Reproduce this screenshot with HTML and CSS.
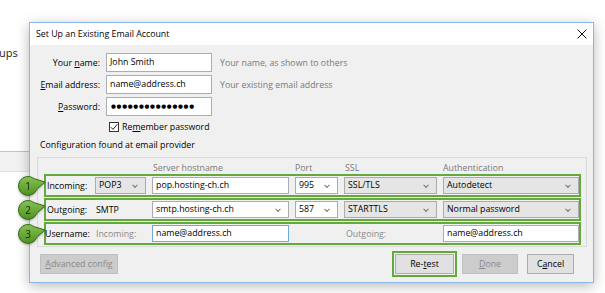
FILE: index.html
```html
<!DOCTYPE html>
<html lang="en">
<head>
  <meta charset="UTF-8">
  <meta name="viewport" content="width=device-width, initial-scale=1.0">
  <title>Set Up an Existing Email Account</title>
  <link rel="stylesheet" href="styles.css">
</head>
<body>
  <!-- window behind the dialog -->
  <div class="backdrop">
    <div class="backdrop-text">ups</div>
    <div class="backdrop-strip"></div>
  </div>

  <div class="dialog">
    <div class="titlebar">
      <span class="title">Set Up an Existing Email Account</span>
      <svg class="close" width="10" height="10" viewBox="0 0 10 10">
        <path d="M0.5 0.5 L9.5 9.5 M9.5 0.5 L0.5 9.5" stroke="#111" stroke-width="1" fill="none"/>
      </svg>
    </div>

    <div class="dialog-body">
      <!-- Account details -->
      <div class="account">
        <label>Your <u>n</u>ame:</label>
        <div class="field">John Smith</div>
        <span class="hint">Your name, as shown to others</span>

        <label><u>E</u>mail address:</label>
        <div class="field">name@address.ch</div>
        <span class="hint">Your existing email address</span>

        <label><u>P</u>assword:</label>
        <div class="field password">&#9679;&#9679;&#9679;&#9679;&#9679;&#9679;&#9679;&#9679;&#9679;&#9679;&#9679;&#9679;&#9679;&#9679;&#9679;</div>
        <span></span>
      </div>

      <div class="remember">
        <span class="checkbox">
          <svg width="8" height="8" viewBox="0 0 8 8">
            <path d="M0.8 4.2 L3 6.4 L7.3 1.2" stroke="#222" stroke-width="1" fill="none"/>
          </svg>
        </span>
        <span>Re<u>m</u>ember password</span>
      </div>

      <div class="found">Configuration found at email provider</div>

      <!-- Server settings -->
      <div class="config-panel">
        <div class="config-head">
          <span></span>
          <span></span>
          <span>Server hostname</span>
          <span>Port</span>
          <span>SSL</span>
          <span>Authentication</span>
        </div>

        <div class="config-row">
          <svg class="badge" width="28" height="26" viewBox="0 0 28 26">
            <defs>
              <linearGradient id="g1" x1="0" y1="0" x2="0" y2="1">
                <stop offset="0" stop-color="#86c451"/>
                <stop offset="1" stop-color="#4f8f23"/>
              </linearGradient>
            </defs>
            <path d="M16.1 5.7 L27 9 L18.9 16.2 A9.5 9.5 0 1 1 16.1 5.7 Z" fill="url(#g1)" stroke="#376a18" stroke-width="1"/>
            <text x="10" y="16.6" text-anchor="middle">1</text>
          </svg>
          <span class="row-label">Incoming:</span>
          <div class="select grey">POP3</div>
          <div class="field">pop.hosting-ch.ch</div>
          <div class="select">995</div>
          <div class="select grey">SSL/TLS</div>
          <div class="select grey">Autodetect</div>
        </div>

        <div class="config-row">
          <svg class="badge" width="28" height="26" viewBox="0 0 28 26">
            <path d="M16.1 5.7 L27 9 L18.9 16.2 A9.5 9.5 0 1 1 16.1 5.7 Z" fill="url(#g1)" stroke="#376a18" stroke-width="1"/>
            <text x="10" y="16.6" text-anchor="middle">2</text>
          </svg>
          <span class="row-label">Outgoing:</span>
          <span class="plain">SMTP</span>
          <div class="select">smtp.hosting-ch.ch</div>
          <div class="select">587</div>
          <div class="select grey">STARTTLS</div>
          <div class="select grey">Normal password</div>
        </div>

        <div class="config-row">
          <svg class="badge" width="28" height="26" viewBox="0 0 28 26">
            <path d="M16.1 5.7 L27 9 L18.9 16.2 A9.5 9.5 0 1 1 16.1 5.7 Z" fill="url(#g1)" stroke="#376a18" stroke-width="1"/>
            <text x="10" y="16.6" text-anchor="middle">3</text>
          </svg>
          <span class="row-label user">Username:</span>
          <span class="muted">Incoming:</span>
          <div class="field focused">name@address.ch</div>
          <span></span>
          <span class="muted">Outgoing:</span>
          <div class="field">name@address.ch</div>
        </div>
      </div>

      <!-- Buttons -->
      <div class="actions">
        <button class="btn disabled advanced"><u>A</u>dvanced config</button>
        <span class="spacer"></span>
        <span class="highlight"><button class="btn retest">Re-<u>t</u>est</button></span>
        <button class="btn disabled done"><u>D</u>one</button>
        <button class="btn cancel">C<u>a</u>ncel</button>
      </div>
    </div>
  </div>
</body>
</html>
```

FILE: styles.css
```css
body {
  margin: 0;
  width: 605px;
  height: 293px;
  overflow: hidden;
  position: relative;
  background: #fff;
  font-family: "Open Sans", "Liberation Sans", sans-serif;
  font-size: 8.8px;
  color: #111;
}

u {
  text-decoration-thickness: 1px;
  text-underline-offset: 1px;
}

/* Background window */
.backdrop-text {
  padding-top: 45px;
  margin-left: -1px;
  font-size: 11px;
  line-height: 16px;
  color: #222;
}

.backdrop-strip {
  margin-top: 90px;
  width: 40px;
  height: 19px;
  background: #f2f2f2;
  border-top: 1px solid #c4c4c4;
  border-bottom: 1px solid #e0e0e0;
}

/* Dialog window */
.dialog {
  position: absolute;
  left: 29px;
  top: 22px;
  width: 565px;
  height: 261px;
  box-sizing: border-box;
  border: 1px solid #89b7e5;
  background: #f0f0f0;
  box-shadow: 0 3px 12px rgba(0, 0, 0, 0.28);
}

.titlebar {
  height: 22px;
  background: #fff;
  display: flex;
  align-items: center;
  justify-content: space-between;
  padding: 0 6px 0 6px;
}

.title {
  font-size: 8.8px;
  color: #000;
}

.dialog-body {
  padding: 8px 0 0 7px;
}

.account {
  display: grid;
  grid-template-columns: 63px 106px auto;
  column-gap: 6px;
  row-gap: 3px;
  align-items: center;
}

.account label {
  text-align: right;
  color: #000;
}

.field {
  height: 19px;
  box-sizing: border-box;
  border: 1px solid #abadb3;
  background: #fff;
  padding: 0 3px;
  line-height: 17px;
  color: #000;
  white-space: nowrap;
  overflow: hidden;
}

.password {
  font-family: "DejaVu Sans", sans-serif;
  font-size: 5.6px;
  letter-spacing: 0.7px;
  padding-left: 4px;
}

.hint {
  margin-left: 2px;
  color: #7a7a7a;
}

.remember {
  margin-top: 5px;
  padding-left: 72px;
  height: 12px;
  display: flex;
  align-items: center;
  gap: 3px;
  color: #000;
}

.checkbox {
  width: 10px;
  height: 10px;
  box-sizing: border-box;
  border: 1px solid #333;
  background: #fff;
  display: flex;
  align-items: center;
  justify-content: center;
}

.found {
  margin-top: 6px;
  padding-left: 3px;
  line-height: 12px;
  color: #000;
}

/* Server settings panel */
.config-panel {
  margin-top: 6px;
  width: 550px;
  box-sizing: border-box;
  border: 1px solid #dadada;
  padding: 4px 5px 1px 6px;
}

.config-head,
.config-row {
  display: grid;
  grid-template-columns: 43px 51px 137px 43px 93px 136px;
  column-gap: 6px;
  align-items: center;
}

.config-head {
  padding: 0 2px;
  height: 12px;
  line-height: 12px;
  color: #7a7a7a;
}

.config-head span:nth-child(3),
.config-head span:nth-child(5) {
  padding-left: 1px;
}

.config-row {
  position: relative;
  border: 2px solid #63a93c;
  padding: 1px 0;
  margin-top: 1px;
}

.config-head + .config-row {
  margin-top: 0;
}

.config-row .field,
.config-row .select {
  height: 17px;
  line-height: 15px;
}

.badge {
  position: absolute;
  left: -28px;
  top: -3px;
  filter: drop-shadow(0 1px 1px rgba(0, 0, 0, 0.25));
}

.badge text {
  font-family: "Open Sans", sans-serif;
  font-size: 10px;
  fill: #14240a;
}

.row-label {
  padding-left: 1px;
  color: #000;
  white-space: nowrap;
}

.row-label.user {
  margin-left: -1px;
  padding-left: 0;
}

.plain {
  padding-left: 1px;
  color: #000;
}

.muted {
  padding-left: 1px;
  color: #8a8a8a;
}

.config-row span:nth-child(6).muted {
  padding-left: 2px;
}

.field.focused {
  border-color: #6fa9de;
}

.select {
  position: relative;
  box-sizing: border-box;
  border: 1px solid #acacac;
  background: #fff;
  padding: 0 3px;
  color: #000;
  white-space: nowrap;
}

.select.grey {
  background: #e5e5e5;
}

.select::after {
  content: "";
  position: absolute;
  right: 8px;
  top: 50%;
  width: 3px;
  height: 3px;
  border-right: 1px solid #777;
  border-bottom: 1px solid #777;
  transform: translateY(-70%) rotate(45deg);
}

/* Buttons */
.actions {
  margin-top: 5px;
  height: 24px;
  display: flex;
  align-items: center;
  padding-right: 11px;
  width: 548px;
  box-sizing: border-box;
}

.spacer {
  flex: 1;
}

.btn {
  height: 20px;
  box-sizing: border-box;
  border: 1px solid #adadad;
  background: #e1e1e1;
  font-family: "Open Sans", "Liberation Sans", sans-serif;
  font-size: 8.8px;
  color: #000;
  padding: 0;
}

.btn.disabled {
  background: #cccccc;
  border-color: #bfbfbf;
  color: #8a8a8a;
}

.advanced {
  margin-left: 3px;
  width: 78px;
}

.highlight {
  display: flex;
  border: 2px solid #63a93c;
  padding: 1px;
}

.retest {
  width: 59px;
}

.done {
  margin-left: 5px;
  width: 56px;
}

.cancel {
  margin-left: 9px;
  width: 47px;
}
```
